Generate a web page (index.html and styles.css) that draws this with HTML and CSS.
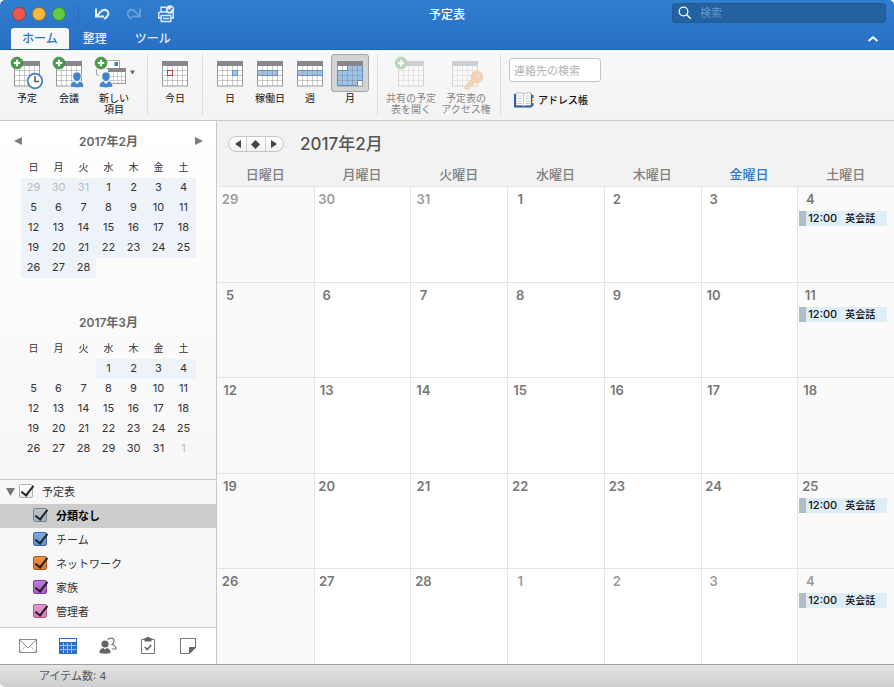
FILE: index.html
```html
<!DOCTYPE html>
<html lang="ja">
<head>
  <meta charset="UTF-8" />
  <meta name="viewport" content="width=device-width, initial-scale=1.0"/>
  <title>予定表</title>
  <link rel="stylesheet" href="styles.css">
</head>
<body>

  <!-- shared icon parts -->
  <svg class="defs" width="0" height="0" aria-hidden="true">
    <symbol id="cal-base" viewBox="0 0 26 26">
      <rect x="0.5" y="0.5" width="25" height="24.5" fill="#fff" stroke="#999"/>
    </symbol>
    <symbol id="cal-lines" viewBox="0 0 26 26">
      <path d="M5.500 5v20M10.500 5v20M15.500 5v20M20.500 5v20M1 9.500h24M1 14.500h24M1 19.500h24" stroke="#808080" stroke-opacity=".4" fill="none"/>
      <rect x="0" y="0" width="26" height="5" fill="#88878b"/>
    </symbol>
    <symbol id="plus" viewBox="0 0 14 14">
      <circle cx="7" cy="7" r="6" fill="#4b9a4e" stroke="#3c8540" stroke-width=".6"/>
      <path d="M7 3.800v6.400M3.800 7h6.400" stroke="#fff" stroke-width="2.200"/>
    </symbol>
    <symbol id="person" viewBox="0 0 16 18">
      <path d="M1 16c0-4 2-5.600 5-6.200h4c3 .6 5 2.200 5 6.200q-7 2-14 0z" fill="#4487cc" stroke="#f6f6f6"/>
      <path d="M8 1c2.600 0 4.200 1.700 4.200 4.300S10.300 10.500 8 10.500 3.800 8 3.800 5.300 5.400 1 8 1z" fill="#3f82c8" stroke="#f6f6f6" stroke-width=".8"/>
      <path d="M5.500 10.500l2.500 2.500 2.500-2.500z" fill="#fff"/>
    </symbol>
  </svg>

  <div class="window">
    <header class="top">
      <div class="titlebar">
        <div class="title-left">
          <button class="light red" aria-label="閉じる"></button>
          <button class="light yellow" aria-label="しまう"></button>
          <button class="light green" aria-label="拡大"></button>
          <span class="title-sep"></span>
          <button class="quick" aria-label="元に戻す">
            <svg width="18" height="18" viewBox="0 0 18 18" fill="none" stroke="#e3eefa" stroke-width="2"><path d="M3 3.500v8h8M3.500 11L8 6.500q3.500-3 6.500-.5 3 4-3.500 8"/></svg>
          </button>
          <button class="quick faded" aria-label="やり直す">
            <svg width="18" height="18" viewBox="0 0 18 18" fill="none" stroke="#e3eefa" stroke-width="2"><path d="M15 3.500v8H7M14.500 11L10 6.500q-3.500-3-6.500-.5-3 4 3.500 8"/></svg>
          </button>
          <button class="quick" aria-label="印刷">
            <svg width="18" height="18" viewBox="0 0 18 18" fill="none" stroke="#e3eefa" stroke-width="1.400"><path d="M9 2.200H4V7M4 13H1.700V9q0-2 2-2h10.600q2 0 2 2v4H14M4.200 10.500h9.600v6H4.200zM6 13.500h6"/><circle cx="13" cy="4.500" r="4.300" fill="#e3eefa" stroke="none"/><path d="M10.800 4.500l1.600 1.700 3-3.400" stroke="#2f78c9"/></svg>
          </button>
        </div>
        <h1 class="title">予定表</h1>
        <label class="search">
          <svg width="14" height="14" viewBox="0 0 14 14" fill="none" stroke="#fff" stroke-width="1.300"><circle cx="5.500" cy="5.500" r="4.300"/><path d="M8.700 8.700l4 4"/></svg>
          <input type="search" placeholder="検索" aria-label="検索">
        </label>
      </div>
      <nav class="tabs">
        <button class="tab active">ホーム</button>
        <button class="tab">整理</button>
        <button class="tab">ツール</button>
        <button class="collapse" aria-label="リボンを閉じる">
          <svg width="12" height="8" viewBox="0 0 12 8" fill="none" stroke="#fff" stroke-width="2"><path d="M1.500 6L6 2.200 10.500 6"/></svg>
        </button>
      </nav>
    </header>

    <div class="ribbon">
      <div class="group create">
        <button class="tool">
          <span class="icon"><svg width="34" height="34" viewBox="0 0 34 34">
            <use href="#cal-base" x="4" y="5" width="26" height="26"/><use href="#cal-lines" x="4" y="5" width="26" height="26"/>
            <use href="#plus" width="14" height="14"/>
            <circle cx="25" cy="25" r="7.300" fill="#fff" stroke="#3a7fc2" stroke-width="1.700"/>
            <path d="M25 20v5.500h4" fill="none" stroke="#555" stroke-width="1.500"/>
          </svg></span>
          <span class="label">予定</span>
        </button>
        <button class="tool">
          <span class="icon"><svg width="34" height="34" viewBox="0 0 34 34">
            <use href="#cal-base" x="4" y="5" width="26" height="26"/><use href="#cal-lines" x="4" y="5" width="26" height="26"/>
            <use href="#plus" width="14" height="14"/>
            <use href="#person" x="17" y="15" width="16" height="18"/>
          </svg></span>
          <span class="label">会議</span>
        </button>
        <button class="tool wide">
          <span class="icon"><svg width="42" height="34" viewBox="0 0 42 34">
            <path d="M13 4.500h13.500v8H13M3.500 13v6h3" fill="#fff" stroke="#aaa"/>
            <rect x="21.500" y="6" width="3.500" height="4" fill="#3a7fc2"/>
            <rect x="15.500" y="12.500" width="17" height="15" fill="#fff" stroke="#999"/>
            <path d="M20.500 16v11M24.500 16v11M28.500 16v11M16 20.500h16M16 24.500h16" stroke="#ccc"/>
            <rect x="15" y="12" width="18" height="4" fill="#88878b"/>
            <use href="#plus" x="1" width="14" height="14"/>
            <use href="#person" x="5" y="15" width="16" height="18"/>
            <path d="M37 14.500h5l-2.500 4z" fill="#666"/>
          </svg></span>
          <span class="label">新しい<br>項目</span>
        </button>
      </div>

      <div class="group">
        <button class="tool">
          <span class="icon"><svg width="34" height="34" viewBox="0 0 34 34">
            <use href="#cal-base" x="4" y="5" width="26" height="26"/><use href="#cal-lines" x="4" y="5" width="26" height="26"/>
            <rect x="9.500" y="14.500" width="5" height="5" fill="#fff" stroke="#cf3a3f"/>
          </svg></span>
          <span class="label">今日</span>
        </button>
      </div>

      <div class="group views">
        <button class="tool">
          <span class="icon"><svg width="34" height="34" viewBox="0 0 34 34">
            <use href="#cal-base" x="4" y="5" width="26" height="26"/>
            <use href="#cal-lines" x="4" y="5" width="26" height="26"/>
            <rect x="19.500" y="14.500" width="5" height="5" fill="#a0c3e6" stroke="#6699cb"/>
          </svg></span>
          <span class="label">日</span>
        </button>
        <button class="tool">
          <span class="icon"><svg width="34" height="34" viewBox="0 0 34 34">
            <use href="#cal-base" x="4" y="5" width="26" height="26"/>
            <rect x="4.500" y="14.500" width="20" height="5" fill="#a0c3e6" stroke="#6699cb"/>
            <use href="#cal-lines" x="4" y="5" width="26" height="26"/>
          </svg></span>
          <span class="label">稼働日</span>
        </button>
        <button class="tool">
          <span class="icon"><svg width="34" height="34" viewBox="0 0 34 34">
            <use href="#cal-base" x="4" y="5" width="26" height="26"/>
            <rect x="4.500" y="14.500" width="25" height="5" fill="#a0c3e6" stroke="#6699cb"/>
            <use href="#cal-lines" x="4" y="5" width="26" height="26"/>
          </svg></span>
          <span class="label">週</span>
        </button>
        <button class="tool pressed">
          <span class="icon"><svg width="34" height="34" viewBox="0 0 34 34">
            <use href="#cal-base" x="4" y="5" width="26" height="26"/>
            <path d="M14.500 9.500h15v15h-5v5h-20v-15h10z" fill="#9cc2e8" stroke="#5b8fc4"/>
            <use href="#cal-lines" x="4" y="5" width="26" height="26"/>
          </svg></span>
          <span class="label">月</span>
        </button>
      </div>

      <div class="group shared">
        <button class="tool" disabled>
          <span class="icon"><svg width="34" height="34" viewBox="0 0 34 34">
            <use href="#cal-base" x="4" y="5" width="26" height="26"/><use href="#cal-lines" x="4" y="5" width="26" height="26"/>
            <use href="#plus" width="14" height="14"/>
          </svg></span>
          <span class="label">共有の予定<br>表を開く</span>
        </button>
        <button class="tool" disabled>
          <span class="icon"><svg width="34" height="34" viewBox="0 0 34 34">
            <use href="#cal-base" x="3" y="5" width="26" height="26"/><use href="#cal-lines" x="3" y="5" width="26" height="26"/>
            <path d="M27 15a6 6 0 1 1-1 11.500l-2 1.500-1 2-2 .5-1 2.500h-4v-3l6.500-6.500A6 6 0 0 1 27 15zm1.500 3a1.800 1.800 0 1 0 .1 0z" fill="#f0953a" stroke="#d8842c" stroke-width=".7" fill-rule="evenodd"/>
          </svg></span>
          <span class="label">予定表の<br>アクセス権</span>
        </button>
      </div>

      <div class="group contacts">
        <input class="contact-search" type="text" placeholder="連絡先の検索" aria-label="連絡先の検索">
        <button class="address">
          <svg width="20" height="16" viewBox="0 0 20 16"><path d="M0 2h18v13.500H0z" fill="#2463a8"/><path d="M18 3h1.500v3H18zM18 11h1.500v3H18z" fill="#2463a8"/><path d="M18 6.500h1.500v3H18z" fill="#e5b53a"/><path d="M2 1h5.500q2 0 2 1.500Q9.500 1 11.500 1H17v12.500h-5.500q-2 0-2 1.500 0-1.500-2-1.500H2z" fill="#fff" stroke="#777" stroke-width=".5"/><path d="M9.500 2.500V14M3.500 4h4.200M3.500 6.500h4.200M3.500 9h4.200M3.500 11.500h4.200M11.300 4h4.200M11.300 6.500h4.200M11.300 9h4.200M11.300 11.500h4.200" stroke="#b5b5b5" stroke-width=".8"/></svg>
          アドレス帳
        </button>
      </div>
    </div>

    <div class="content">
      <aside class="sidebar">
        <div class="minis">
          <section class="mini">
            <div class="mini-head">
              <button aria-label="前の月"><svg width="8" height="8" viewBox="0 0 8 8"><path d="M8 0v8L0 4z" fill="#7d7d7d"/></svg></button>
              <h2>2017年2月</h2>
              <button aria-label="次の月"><svg width="8" height="8" viewBox="0 0 8 8"><path d="M0 0v8l8-4z" fill="#7d7d7d"/></svg></button>
            </div>
            <table>
              <thead>
                <tr><th>日</th><th>月</th><th>火</th><th>水</th><th>木</th><th>金</th><th>土</th></tr>
              </thead>
              <tbody>
                <tr class="range"><td class="out">29</td><td class="out">30</td><td class="out">31</td><td>1</td><td>2</td><td>3</td><td>4</td></tr>
                <tr class="range"><td>5</td><td>6</td><td>7</td><td>8</td><td>9</td><td>10</td><td>11</td></tr>
                <tr class="range"><td>12</td><td>13</td><td>14</td><td>15</td><td>16</td><td>17</td><td>18</td></tr>
                <tr class="range"><td>19</td><td>20</td><td>21</td><td>22</td><td>23</td><td>24</td><td>25</td></tr>
                <tr class="range"><td>26</td><td>27</td><td>28</td></tr>
              </tbody>
            </table>
          </section>

          <section class="mini">
            <div class="mini-head"><h2>2017年3月</h2></div>
            <table>
              <thead>
                <tr><th>日</th><th>月</th><th>火</th><th>水</th><th>木</th><th>金</th><th>土</th></tr>
              </thead>
              <tbody>
                <tr class="range"><td class="blank" colspan="3"></td><td>1</td><td>2</td><td>3</td><td>4</td></tr>
                <tr><td>5</td><td>6</td><td>7</td><td>8</td><td>9</td><td>10</td><td>11</td></tr>
                <tr><td>12</td><td>13</td><td>14</td><td>15</td><td>16</td><td>17</td><td>18</td></tr>
                <tr><td>19</td><td>20</td><td>21</td><td>22</td><td>23</td><td>24</td><td>25</td></tr>
                <tr><td>26</td><td>27</td><td>28</td><td>29</td><td>30</td><td>31</td><td class="out">1</td></tr>
              </tbody>
            </table>
          </section>
        </div>

        <div class="calendars">
          <div class="cal-root">
            <button class="disclosure" aria-label="予定表を折りたたむ"><svg width="9" height="8" viewBox="0 0 9 8"><path d="M0 0h9L4.500 8z" fill="#777"/></svg></button>
            <label><input type="checkbox" checked>予定表</label>
          </div>
          <label class="cal-item selected"><input class="gray" type="checkbox" checked>分類なし</label>
          <label class="cal-item"><input class="blue" type="checkbox" checked>チーム</label>
          <label class="cal-item"><input class="orange" type="checkbox" checked>ネットワーク</label>
          <label class="cal-item"><input class="purple" type="checkbox" checked>家族</label>
          <label class="cal-item"><input class="pink" type="checkbox" checked>管理者</label>
        </div>

        <nav class="modules">
          <button aria-label="メール">
            <svg width="20" height="20" viewBox="0 0 20 20" fill="none" stroke="#888"><path d="M1.500 3.500h17v13h-17zM1.500 3.500L10 12l8.500-8.500"/><path d="M1.500 16.500l6-6.500M18.500 16.500l-6-6.500" stroke="#bbb"/></svg>
          </button>
          <button aria-label="予定表">
            <svg width="20" height="20" viewBox="0 0 20 20"><rect x="1.500" y="2.500" width="17" height="15" fill="#2672c7" stroke="#2672c7"/><rect x="2" y="3" width="16" height="3" fill="#fff"/><path d="M5.500 7v10M9.500 7v10M13.500 7v10M2 9.500h16M2 13.500h16" stroke="#9cc4ec"/></svg>
          </button>
          <button aria-label="連絡先">
            <svg width="20" height="20" viewBox="0 0 20 20"><path d="M1.500 17c0-3.500 1.500-4.500 4-5l1.500 1.500L8.500 12c2.500.5 4 1.500 4 5q-5.500 1.500-11 0z" fill="#666"/><circle cx="7" cy="8" r="3.600" fill="#666"/><path d="M10 4c1-3 6.500-2.500 6 1.500-.2 1.800-1 2.500-2 3 2.500.5 4 1.500 4 4.500h-4" fill="none" stroke="#777" stroke-width="1.200"/></svg>
          </button>
          <button aria-label="タスク">
            <svg width="20" height="20" viewBox="0 0 20 20"><path d="M3.500 3.500h13v14h-13z" fill="#fff" stroke="#777"/><path d="M6.500 2H8q2-2.500 4 0h1.500v3.500h-7z" fill="#666"/><path d="M6.800 11l2.400 2.500 4-4.500" fill="none" stroke="#666" stroke-width="1.700"/></svg>
          </button>
          <button aria-label="メモ">
            <svg width="20" height="20" viewBox="0 0 20 20"><path d="M2.500 2.500h15v9l-6 6h-9z" fill="#fff" stroke="#777"/><path d="M17.500 11.500l-6 6v-6z" fill="#666" stroke="#666"/></svg>
          </button>
        </nav>
      </aside>

      <main class="month">
        <div class="month-head">
          <div class="pager">
            <button aria-label="前へ"><svg width="6" height="8" viewBox="0 0 6 8"><path d="M6 0v8L0 4z" fill="#444"/></svg></button>
            <button aria-label="今日"><svg width="9" height="9" viewBox="0 0 9 9"><path d="M4.500 0L9 4.500 4.500 9 0 4.500z" fill="#444"/></svg></button>
            <button aria-label="次へ"><svg width="6" height="8" viewBox="0 0 6 8"><path d="M0 0v8l6-4z" fill="#444"/></svg></button>
          </div>
          <h2>2017年2月</h2>
        </div>
        <table class="month-grid">
          <thead>
            <tr><th>日曜日</th><th>月曜日</th><th>火曜日</th><th>水曜日</th><th>木曜日</th><th class="current">金曜日</th><th>土曜日</th></tr>
          </thead>
          <tbody>
            <tr>
              <td class="out"><span class="date">29</span></td>
              <td class="out"><span class="date">30</span></td>
              <td class="out"><span class="date">31</span></td>
              <td><span class="date">1</span></td>
              <td><span class="date">2</span></td>
              <td><span class="date">3</span></td>
              <td><span class="date">4</span><div class="event"><time>12:00</time>英会話</div></td>
            </tr>
            <tr>
              <td><span class="date">5</span></td>
              <td><span class="date">6</span></td>
              <td><span class="date">7</span></td>
              <td><span class="date">8</span></td>
              <td><span class="date">9</span></td>
              <td><span class="date">10</span></td>
              <td><span class="date">11</span><div class="event"><time>12:00</time>英会話</div></td>
            </tr>
            <tr>
              <td><span class="date">12</span></td>
              <td><span class="date">13</span></td>
              <td><span class="date">14</span></td>
              <td><span class="date">15</span></td>
              <td><span class="date">16</span></td>
              <td><span class="date">17</span></td>
              <td><span class="date">18</span></td>
            </tr>
            <tr>
              <td><span class="date">19</span></td>
              <td><span class="date">20</span></td>
              <td><span class="date">21</span></td>
              <td><span class="date">22</span></td>
              <td><span class="date">23</span></td>
              <td><span class="date">24</span></td>
              <td><span class="date">25</span><div class="event"><time>12:00</time>英会話</div></td>
            </tr>
            <tr>
              <td><span class="date">26</span></td>
              <td><span class="date">27</span></td>
              <td><span class="date">28</span></td>
              <td class="out"><span class="date">1</span></td>
              <td class="out"><span class="date">2</span></td>
              <td class="out"><span class="date">3</span></td>
              <td class="out"><span class="date">4</span><div class="event"><time>12:00</time>英会話</div></td>
            </tr>
          </tbody>
        </table>
      </main>
    </div>

    <footer class="status">アイテム数: 4</footer>
  </div>

</body>
</html>
```

FILE: styles.css
```css
* {
  box-sizing: border-box;
}

body {
  margin: 0;
  background: #fff;
  color: #333;
  font-family: Inter, "Noto Sans CJK JP", sans-serif;
  font-size: 11px;
  line-height: 16px;
}

h1, h2 {
  margin: 0;
}

button {
  display: flex;
  align-items: center;
  justify-content: center;
  padding: 0;
  border: 0;
  background: none;
  color: inherit;
  font: inherit;
}

input {
  margin: 0;
  font: inherit;
}

svg {
  display: block;
  flex: none;
}

table {
  border-collapse: collapse;
}

.defs {
  position: absolute;
}

.window {
  display: flex;
  flex-direction: column;
  min-height: 100vh;
  border-radius: 5px 5px 0 5px;
  overflow: hidden;
}

/* title bar and tabs */
.top {
  background: linear-gradient(#307dcd, #2870c5);
  border-bottom: 1px solid #2160ad;
  color: #fff;
}

.titlebar {
  display: grid;
  grid-template-columns: 1fr auto 1fr;
  align-items: center;
  height: 28px;
  padding: 0 8px;
}

.title-left {
  display: flex;
  align-items: center;
  padding-left: 4px;
}

.light {
  width: 14px;
  height: 14px;
  margin-right: 6px;
  border: 1px solid;
  border-radius: 50%;
}

.red {
  background: #f05650;
  border-color: #93453f;
}

.yellow {
  background: #f6bb3c;
  border-color: #94773b;
}

.green {
  background: #62cb41;
  border-color: #3f8444;
}

.title-sep {
  width: 1px;
  height: 16px;
  margin: 0 14px 0 6px;
  background: #276abb;
}

.quick {
  margin-right: 14px;
}

.faded {
  opacity: 0.3;
}

.title {
  padding-top: 2px;
  font-size: 12px;
  font-weight: 500;
}

.search {
  display: flex;
  align-items: center;
  justify-self: end;
  width: 214px;
  height: 20px;
  padding-left: 5px;
  margin-bottom: 2px;
  background: #24619f;
  border: 1px solid #225a98;
  border-radius: 3px;
}

.search input {
  flex: 1;
  min-width: 0;
  padding: 0 8px;
  border: 0;
  background: none;
  color: #fff;
}

.search input::placeholder {
  color: #6496c8;
}

.tabs {
  display: flex;
  height: 21px;
  padding: 0 15px 0 11px;
}

.tab {
  padding: 0 14px;
  color: #e4effa;
  font-size: 12px;
  font-weight: 500;
}

.tab.active {
  padding: 0 11px;
  background: #f7f7f7;
  border-radius: 3px 3px 0 0;
  color: #2b74c7;
}

.collapse {
  margin-left: auto;
}

/* ribbon */
.ribbon {
  display: flex;
  padding: 4px 0;
  background: linear-gradient(#f8f8f8, #f3f3f3);
  border-bottom: 1px solid #c8c8c8;
}

.group {
  display: flex;
  align-items: flex-start;
  height: 62px;
  padding: 0 8px;
  border-right: 1px solid #dedede;
}

.group.create {
  padding: 0 9px 0 6px;
}

.create .tool {
  width: 42px;
}

.create .wide {
  width: 48px;
}

.views {
  gap: 2px;
}

.group.shared {
  padding: 0 7px 0 6px;
  gap: 1px;
}

.tool {
  flex-direction: column;
  width: 38px;
  color: #111;
}

.icon {
  padding: 1px;
  border: 1px solid transparent;
  border-radius: 3px;
}

.pressed .icon {
  background: #d4d4d4;
  border-color: #a5a5a5;
}

.label {
  padding-top: 1px;
  font-size: 10px;
  line-height: 11px;
  white-space: nowrap;
}

.shared .tool {
  width: 54px;
  color: #858585;
}

.shared svg {
  opacity: 0.35;
}

.group.contacts {
  flex-direction: column;
  gap: 10px;
  padding-top: 4px;
  border: 0;
}

.contact-search {
  width: 92px;
  height: 24px;
  padding: 2px 4px 0;
  border: 1px solid #c4c4c4;
  border-radius: 3px;
  background: #fff;
}

.contact-search::placeholder {
  color: #b3b3b3;
}

.address {
  gap: 4px;
  padding-left: 5px;
  color: #111;
  font-size: 10px;
  font-weight: 500;
}

/* sidebar */
.content {
  display: flex;
  flex: 1;
}

.sidebar {
  display: flex;
  flex-direction: column;
  width: 217px;
  border-right: 1px solid #c8c8c8;
}

.minis {
  flex: 1;
  padding: 10px 13px 0 14px;
  background: linear-gradient(#fff, #f7f7f7);
}

.mini {
  margin-bottom: 34px;
}

.mini:last-child {
  margin-bottom: 0;
}

.mini-head {
  display: flex;
  align-items: center;
  justify-content: space-between;
  height: 20px;
}

.mini-head h2 {
  margin: 0 auto;
  padding-top: 2px;
  color: #666;
  font-size: 12px;
  font-weight: 600;
}

.mini table {
  width: 175px;
  margin: 7px 0 0 7px;
  table-layout: fixed;
}

.mini th,
.mini td {
  height: 20px;
  padding: 0 0 2px;
  font-weight: 400;
  text-align: center;
}

.mini th {
  font-size: 10px;
}

.range td {
  background: #edf3f8;
}

.mini .blank {
  background: none;
}

.mini .out {
  color: #b8bcbe;
}

.calendars {
  padding-bottom: 3px;
  background: #f7f7f7;
  border-top: 1px solid #c8c8c8;
}

.cal-root {
  display: flex;
  align-items: center;
  gap: 4px;
  height: 24px;
  padding-left: 6px;
}

.calendars label {
  display: flex;
  align-items: center;
  gap: 9px;
}

.calendars .cal-item {
  height: 24px;
  padding-left: 33px;
}

.selected {
  background: #cdcdcd;
  color: #000;
  font-weight: 700;
}

.calendars input {
  appearance: none;
  position: relative;
  width: 14px;
  height: 14px;
  margin-bottom: 2px;
  background: linear-gradient(#fff, #ececec);
  border: 1px solid #b0b0b0;
  border-radius: 2px;
}

/* tick mark, reaches past the top right corner */
.calendars input:checked::after {
  content: "";
  position: absolute;
  left: 4px;
  top: -2px;
  width: 5px;
  height: 11px;
  border: solid #222;
  border-width: 0 2px 2px 0;
  transform: rotate(38deg);
}

.calendars .gray {
  background: linear-gradient(#bac3cc, #a3afba);
  border-color: #7c8790;
}

.calendars .blue {
  background: linear-gradient(#7fabdc, #5c90cf);
  border-color: #4069a0;
}

.calendars .orange {
  background: linear-gradient(#eb9250, #d97629);
  border-color: #a9591f;
}

.calendars .purple {
  background: linear-gradient(#bf7bdb, #a95bce);
  border-color: #7c3d9c;
}

.calendars .pink {
  background: linear-gradient(#e09aca, #d27eb8);
  border-color: #a95d8f;
}

.modules {
  display: flex;
  gap: 20px;
  height: 37px;
  padding-left: 18px;
  background: #fff;
  border-top: 1px solid #c8c8c8;
}

/* month view */
.month {
  display: flex;
  flex: 1;
  flex-direction: column;
  min-width: 0;
  background: #f2f2f2;
}

.month-head {
  display: flex;
  align-items: center;
  gap: 16px;
  height: 42px;
  padding: 4px 11px 0;
}

.month-head h2 {
  color: #555;
  font-size: 17px;
  font-weight: 500;
}

.pager {
  display: flex;
  width: 56px;
  height: 16px;
  background: linear-gradient(#fff, #f0f0f0);
  border: 1px solid #c6c6c6;
  border-radius: 8px;
}

.pager button {
  flex: 1;
}

.pager button + button {
  border-left: 1px solid #cfcfcf;
}

.month-grid {
  display: flex;
  flex: 1;
  flex-direction: column;
}

.month-grid tr {
  display: grid;
  grid-template-columns: repeat(7, 1fr);
}

.month-grid th {
  height: 23px;
  padding: 0;
  color: #808080;
  font-size: 13px;
  font-weight: 500;
  line-height: 22px;
}

.month-grid th.current {
  color: #2b78c8;
}

.month-grid tbody {
  display: grid;
  flex: 1;
  grid-auto-rows: 1fr;
}

.month-grid td {
  padding: 3px 0 0;
  background: #fff;
  border-top: 1px solid #e4e4e4;
  border-left: 1px solid #e4e4e4;
}

.month-grid td:first-child,
.month-grid td:last-child {
  background: #fafafa;
}

.month-grid td:first-child {
  border-left-color: transparent;
}

.date {
  display: block;
  width: 24px;
  color: #777;
  font-size: 13px;
  font-weight: 600;
  line-height: 18px;
  text-align: center;
}

.out .date {
  color: #9c9c9c;
}

.event {
  display: flex;
  gap: 8px;
  height: 15px;
  margin: 3px 7px 0 1px;
  padding-left: 2px;
  background: #dfedf6;
  border-left: 7px solid #b0bdc5;
  color: #111;
  font-size: 10px;
  font-weight: 500;
  line-height: 15px;
  white-space: nowrap;
}

.event time {
  font-size: 11px;
}

/* status bar */
.status {
  height: 23px;
  padding-left: 39px;
  background: linear-gradient(#e4e4e4, #cecece);
  border-top: 1px solid #a0a0a0;
  color: #555;
  line-height: 22px;
}
```
